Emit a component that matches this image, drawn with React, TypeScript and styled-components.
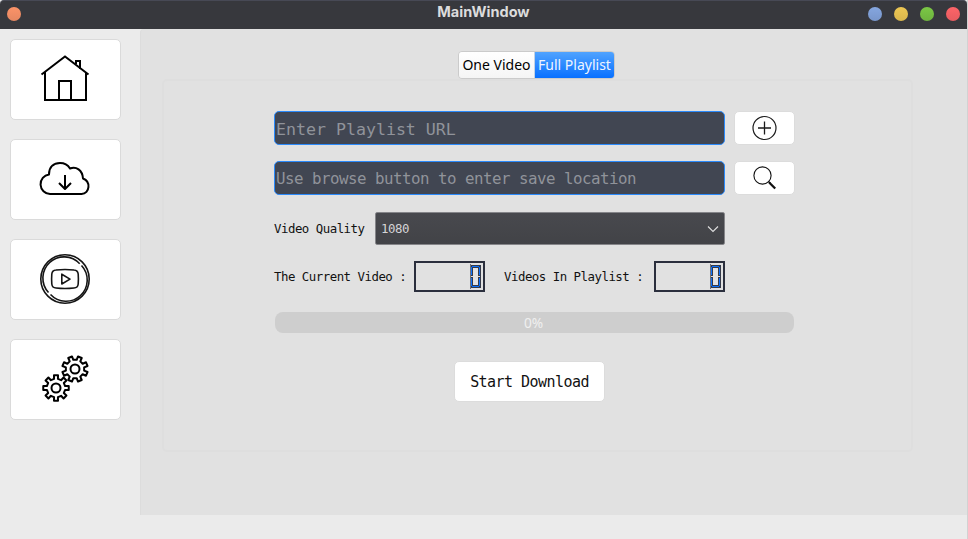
import React from 'react';
import styled, { createGlobalStyle } from 'styled-components';

const mono = '"DejaVu Sans Mono", monospace';

const Global = createGlobalStyle`
  * { box-sizing: border-box; }
  body { margin: 0; background: #ebebeb; font-family: "Noto Sans", sans-serif; overflow: hidden; }
  button, input { margin: 0; padding: 0; outline: none; }
`;

const Window = styled.div`
  width: 968px;
  height: 539px;
  display: flex;
  flex-direction: column;
  background: #ebebeb;
  border-right: 1px solid #d2d2d2;
`;

const TitleBar = styled.header`
  height: 29px;
  flex: none;
  display: grid;
  grid-template-columns: 120px 1fr 120px;
  background: #37383d;
  border-top: 1px solid #474955;
  border-radius: 4px 4px 0 0;
  padding: 0 7px;
`;

const Title = styled.h1`
  margin: 0;
  text-align: center;
  font: 700 14.5px/22px Inter, sans-serif;
  color: #dcdcdc;
`;

const Lights = styled.div<{ $end?: boolean }>`
  display: flex;
  gap: 12px;
  padding-top: 6px;
  justify-content: ${p => (p.$end ? 'flex-end' : 'flex-start')};
`;

const Light = styled.span<{ $top: string; $bottom: string }>`
  width: 14px;
  height: 14px;
  border-radius: 50%;
  background: linear-gradient(${p => p.$top}, ${p => p.$bottom});
`;

const Body = styled.div`
  display: flex;
  height: 486px;
`;

const Sidebar = styled.nav`
  width: 140px;
  flex: none;
  display: flex;
  flex-direction: column;
  gap: 19px;
  padding: 10px 0 0 10px;
`;

const SideButton = styled.button<{ $lift?: number }>`
  width: 111px;
  height: 81px;
  display: flex;
  align-items: center;
  justify-content: center;
  padding: 0 2px ${p => p.$lift ?? 0}px 0;
  background: #fff;
  border: 1px solid #dadada;
  border-radius: 5px;
`;

const Main = styled.main`
  flex: 1;
  display: flex;
  flex-direction: column;
  background: #e1e1e1;
  border-left: 1px solid #dcdcdc;
  border-top-left-radius: 4px;
  padding: 22px 54px 0 21px;
`;

const Tabs = styled.div`
  margin-left: 296px;
  display: flex;
  height: 28px;
  width: 157px;
  border: 1px solid #cbcbcb;
  border-radius: 4px;
  overflow: hidden;
`;

const Tab = styled.button<{ $active?: boolean }>`
  width: ${p => (p.$active ? 80 : 75)}px;
  flex: none;
  border: 0;
  font: 14px/26px "Noto Sans", sans-serif;
  white-space: nowrap;
  color: ${p => (p.$active ? '#eef5ff' : '#000')};
  background: ${p => (p.$active ? 'linear-gradient(#50a3ff, #0870ff)' : 'linear-gradient(#fff, #f5f5f5)')};
  border-left: ${p => (p.$active ? '1px solid #c3d3e6' : '0')};
`;

const Pane = styled.section`
  width: 751px;
  height: 373px;
  border: 2px solid #dedede;
  border-radius: 5px;
  padding: 30px 0 0 110px;
`;

const Row = styled.div<{ $height: number; $mb: number }>`
  display: flex;
  align-items: center;
  height: ${p => p.$height}px;
  margin-bottom: ${p => p.$mb}px;
`;

const Field = styled.input<{ $size: number; $spacing: number; $drop?: number }>`
  width: 451px;
  height: 34px;
  border: 1px solid #2b8afb;
  border-radius: 5px;
  background: #414652;
  padding: ${p => p.$drop ?? 0}px 1px 0;
  font: ${p => p.$size}px ${mono};
  letter-spacing: ${p => p.$spacing}px;
  color: #fff;
  &::placeholder { color: #90939a; opacity: 1; }
`;

const ToolButton = styled.button`
  width: 61px;
  height: 34px;
  margin-left: 9px;
  display: flex;
  align-items: center;
  justify-content: center;
  background: #fff;
  border: 1px solid #dcdcdc;
  border-radius: 5px;
`;

const Label = styled.span<{ $width: number; $indent?: number }>`
  width: ${p => p.$width}px;
  flex: none;
  padding-left: ${p => p.$indent ?? 0}px;
  font: 12.4px/20px ${mono};
  letter-spacing: -0.5px;
  white-space: nowrap;
  color: #111;
`;

const Select = styled.div`
  width: 350px;
  height: 33px;
  display: flex;
  align-items: center;
  justify-content: space-between;
  padding: 0 5px 0 5px;
  font: 12.4px ${mono};
  letter-spacing: -0.46px;
  color: #d4d4d6;
  background: linear-gradient(#48494e, #424347);
  border: 1px solid #858589;
  border-radius: 2px;
`;

const Lcd = styled.div`
  width: 71px;
  height: 31px;
  flex: none;
  display: flex;
  justify-content: flex-end;
  padding: 1px 2px 0 0;
  border: 2px solid #2b2f3d;
`;

const Progress = styled.div`
  width: 519px;
  height: 21px;
  margin-left: 1px;
  padding-right: 2px;
  border-radius: 8px;
  background: #cecece;
  color: #f0f0f0;
  text-align: center;
  font: 13.7px/21px "Noto Sans", sans-serif;
`;

const StartButton = styled.button`
  width: 151px;
  height: 41px;
  margin-left: 180px;
  background: #fff;
  border: 1px solid #dcdcdc;
  border-radius: 5px;
  font: 15px ${mono};
  letter-spacing: -0.55px;
  color: #111;
`;

const HomeIcon = () => (
  <svg width="52" height="50" viewBox="0 0 52 50" fill="none" stroke="#000" strokeWidth="2">
    <path d="M2.5 19.5 26 1.5l23.5 18M6 17v28h41V17M20 45V26h12v19M37 9V6h4v8" />
  </svg>
);

const CloudIcon = () => (
  <svg width="52" height="52" viewBox="0 0 52 52" fill="none" stroke="#000" strokeWidth="2" strokeLinejoin="round">
    <path d="M11 42A9.8 9.8 0 0 1 10 22.500C10 14.500 15 11 21 11c4.500 0 8 2.200 10 5.500C37 14 43.500 18 44 26.500c8 3 7 15-1.500 15.500Z" />
    <path d="M26 23v14M20 31l6 6 6-6" />
  </svg>
);

const VideoIcon = () => (
  <svg width="52" height="52" viewBox="0 0 52 52" fill="none" stroke="#151515" strokeWidth="1.6">
    <circle cx="26" cy="26" r="24.200" />
    <path d="M9.500 39.500A21.200 21.200 0 0 1 40.700 10.700M42.500 12.500A21.200 21.200 0 0 1 11.500 41.500" />
    <path d="M17 17Q26 16 35 17Q38.800 17.200 39.200 21Q39.600 26 39.200 31Q38.800 34.800 35 35Q26 36 17 35Q13.200 34.800 12.800 31Q12.400 26 12.800 21Q13.200 17.200 17 17Z" />
    <path d="M22.800 21.200v9.800l8.200-4.900Z" strokeLinejoin="round" />
  </svg>
);

function gearPath(cx: number, cy: number, turn: number): string {
  const points: string[] = [];
  for (let i = 0; i < 8; i++) {
    const profile: [number, number][] = [[-12, 9.3], [-9, 12.9], [9, 12.9], [12, 9.3]];
    for (const [offset, radius] of profile) {
      const a = ((i * 45 + turn + offset) * Math.PI) / 180;
      points.push(`${(cx + radius * Math.cos(a)).toFixed(2)} ${(cy + radius * Math.sin(a)).toFixed(2)}`);
    }
  }
  return `M${points.join('L')}Z`;
}

const GearsIcon = () => (
  <svg width="50" height="50" viewBox="40 354 50 50" fill="none" stroke="#000" strokeWidth="2" strokeLinejoin="round">
    <path d={gearPath(56, 388, 0)} />
    <circle cx="56" cy="388" r="4.500" />
    <path d={gearPath(75, 369, 22.5)} />
    <circle cx="75" cy="369" r="4.500" />
  </svg>
);

const PlusIcon = () => (
  <svg width="26" height="26" viewBox="0 0 26 26" fill="none" stroke="#1a1a1a">
    <circle cx="12.500" cy="13" r="11.500" strokeWidth="1.2" />
    <path d="M12.500 6.500v13M6 13h13" strokeWidth="1.3" />
  </svg>
);

const SearchIcon = () => (
  <svg width="26" height="26" viewBox="0 0 26 26" fill="none" stroke="#111">
    <circle cx="10.500" cy="10.500" r="8.600" strokeWidth="1.1" />
    <path d="m16.500 16.500 2 2" strokeWidth="1.500" />
    <path d="m17.200 17.500 6 6" strokeWidth="2.300" />
  </svg>
);

const ChevronIcon = () => (
  <svg width="12" height="8" viewBox="0 0 12 8" fill="none" stroke="#e0e0e0" strokeWidth="1.1">
    <path d="m1 1.500 5 5 5-5" />
  </svg>
);

const ZeroSegments = () => (
  <svg width="11" height="25" viewBox="0 0 11 25" role="img" aria-label="0" shapeRendering="crispEdges">
    <path d="M0 1h11v23H0z" fill="#343a4a" />
    <path d="M2 2h7v1H2zM1 3h1v8H1zM9 3h1v8H9zM1 14h1v8H1zM9 14h1v8H9zM2 22h7v1H2z" fill="#0a72ff" />
    <path d="M3 4h5v17H3z" fill="#e1e1e1" />
    <path d="M1 12h9v1H1z" fill="#e1e1e1" />
    <path d="M0 0h1v25H0z" fill="#6c707b" />
  </svg>
);

export default function App() {
  return (
    <>
      <Global />
      <Window>
        <TitleBar>
          <Lights><Light $top="#fb9368" $bottom="#e58761" /></Lights>
          <Title>MainWindow</Title>
          <Lights $end>
            <Light $top="#85a6df" $bottom="#7896cb" />
            <Light $top="#edc753" $bottom="#d9b64d" />
            <Light $top="#7bc845" $bottom="#6eb33e" />
            <Light $top="#fd6468" $bottom="#e65c60" />
          </Lights>
        </TitleBar>
        <Body>
          <Sidebar>
            <SideButton aria-label="Home"><HomeIcon /></SideButton>
            <SideButton $lift={4} aria-label="Download"><CloudIcon /></SideButton>
            <SideButton $lift={2} aria-label="Videos"><VideoIcon /></SideButton>
            <SideButton $lift={2} aria-label="Settings"><GearsIcon /></SideButton>
          </Sidebar>
          <Main>
            <Tabs>
              <Tab>One Video</Tab>
              <Tab $active>Full Playlist</Tab>
            </Tabs>
            <Pane>
              <Row $height={34} $mb={16}>
                <Field $size={16.6} $spacing={0} $drop={2} placeholder="Enter Playlist URL" />
                <ToolButton aria-label="Add"><PlusIcon /></ToolButton>
              </Row>
              <Row $height={34} $mb={17}>
                <Field $size={15.8} $spacing={-0.51} placeholder="Use browse button to enter save location" />
                <ToolButton aria-label="Browse"><SearchIcon /></ToolButton>
              </Row>
              <Row $height={33} $mb={16}>
                <Label $width={101}>Video Quality</Label>
                <Select>1080<ChevronIcon /></Select>
              </Row>
              <Row $height={31} $mb={20}>
                <Label $width={140}>The Current Video :</Label>
                <Lcd><ZeroSegments /></Lcd>
                <Label $width={169} $indent={19}>Videos In Playlist :</Label>
                <Lcd><ZeroSegments /></Lcd>
              </Row>
              <Row $height={21} $mb={28}>
                <Progress>0%</Progress>
              </Row>
              <StartButton>Start Download</StartButton>
            </Pane>
          </Main>
        </Body>
      </Window>
    </>
  );
}
